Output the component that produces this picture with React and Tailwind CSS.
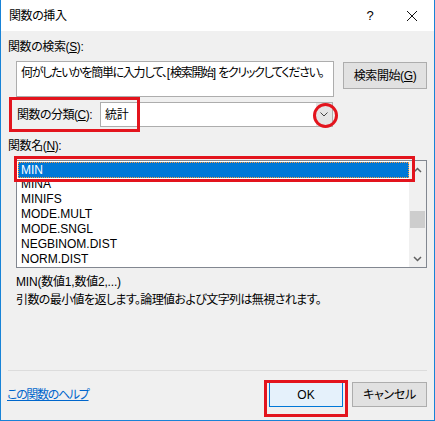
import React from 'react';

const FONT = { fontFamily: '"Liberation Sans", "Noto Sans CJK JP", sans-serif' };

const functions = ['MIN', 'MINA', 'MINIFS', 'MODE.MULT', 'MODE.SNGL', 'NEGBINOM.DIST', 'NORM.DIST'];

const Chevron = ({ up }) => (
    <svg width="9" height="6" viewBox="0 0 9 6">
        <path d={up ? 'M1 5 L4.5 1.5 L8 5' : 'M1 1 L4.5 4.5 L8 1'} fill="none" stroke="#606060" strokeWidth="1.5" />
    </svg>
);

const App = () => {
    return (
        <div className="w-[435px] h-[421px] flex flex-col border-x border-b border-[#1883d7] bg-[#f0f0f0] text-[12px] text-black relative overflow-hidden [font-feature-settings:'palt']" style={FONT}>
            {/* title bar */}
            <div className="h-[31px] bg-white flex items-center pl-[8px] shrink-0">
                <span className="text-[12px] tracking-[-0.4px]">関数の挿入</span>
                <span className="ml-auto text-[13px] w-[12px] text-center mr-[30px]">?</span>
                <svg width="12" height="12" viewBox="0 0 12 12" className="mr-[16px]">
                    <path d="M1 1 L11 11 M11 1 L1 11" stroke="#111" strokeWidth="1" />
                </svg>
            </div>

            <div className="flex-1 flex flex-col pl-[7px] pr-[7px] pt-[9px]">
                <div className="h-[14px] leading-[14px] tracking-[-0.4px]">
                    関数の検索(<span className="underline">S</span>):
                </div>

                {/* search */}
                <div className="flex mt-[7px] pl-[8px]">
                    <div className="w-[318px] h-[36px] bg-white border border-[#adadad] px-[4px] pt-[2px] leading-[18px] tracking-[-1.3px] whitespace-nowrap overflow-hidden">
                        何がしたいかを簡単に入力して、<span className="tracking-normal">[</span>検索開始<span className="tracking-normal">]</span> をクリックしてください。
                    </div>
                    <button className="ml-[9px] mt-[1px] w-[84px] h-[27px] bg-[#e1e1e1] border border-[#adadad] tracking-[-0.4px]">
                        検索開始(<span className="underline">G</span>)
                    </button>
                </div>

                {/* category */}
                <div className="flex items-center mt-[5px] h-[25px] pl-[9px]">
                    <span className="tracking-[-0.5px] w-[83px]">
                        関数の分類(<span className="underline">C</span>):
                    </span>
                    <div className="w-[233px] h-[25px] bg-white border border-[#adadad] flex items-center">
                        <span className="pl-[4px] tracking-[-0.3px]">統計</span>
                        <div className="ml-auto w-[16px] h-[23px] bg-[#e5e5e5] flex items-center justify-center">
                            <svg width="8" height="5" viewBox="0 0 8 5">
                                <path d="M0.5 0.5 L4 4 L7.5 0.5" fill="none" stroke="#444" strokeWidth="1" />
                            </svg>
                        </div>
                    </div>
                </div>

                <div className="mt-[12px] h-[14px] leading-[14px] tracking-[-0.4px]">
                    関数名(<span className="underline">N</span>):
                </div>

                {/* function list */}
                <div className="mt-[7px] ml-[8px] w-[411px] h-[108px] bg-white border border-[#828790] flex">
                    <div className="flex-1 pt-[1px] pl-[1px]">
                        {functions.map((f, i) => (
                            <div
                                key={f}
                                className={
                                    i === 0
                                        ? 'h-[16px] leading-[14px] bg-[#0078d7] text-white pl-[2px] border border-dotted border-[#ff9a3c] mb-[-1px]'
                                        : 'h-[15px] leading-[15px] pl-[3px]'
                                }
                            >
                                {f}
                            </div>
                        ))}
                    </div>
                    <div className="w-[17px] bg-[#f0f0f0] flex flex-col items-center">
                        <div className="h-[17px] flex items-center justify-center"><Chevron up /></div>
                        <div className="flex-1 w-full relative">
                            <div className="absolute left-[1px] right-[1px] top-[33px] h-[17px] bg-[#cdcdcd]" />
                        </div>
                        <div className="h-[17px] flex items-center justify-center"><Chevron /></div>
                    </div>
                </div>

                {/* description */}
                <div className="mt-[5px] pl-[8px] leading-[18px]">
                    <div className="tracking-[-0.2px]">MIN(数値1,数値2,...)</div>
                    <div className="tracking-[-0.6px]">引数の最小値を返します。論理値および文字列は無視されます。</div>
                </div>

                <div className="mt-auto border-t border-[#dcdcdc]" />

                {/* footer */}
                <div className="flex items-center h-[49px] pb-[2px]">
                    <a href="#" className="text-[#0066cc] underline tracking-[-1.3px] -ml-[1px]">この関数のヘルプ</a>
                    <button className="ml-auto w-[74px] h-[25px] bg-[#e5f1fb] border border-[#0078d7]">OK</button>
                    <button className="ml-[9px] w-[75px] h-[25px] bg-[#e1e1e1] border border-[#adadad] tracking-[-0.3px]">キャンセル</button>
                </div>
            </div>

            {/* red annotations */}
            <div className="absolute left-[8px] top-[97px] w-[131px] h-[35px] border-[3px] border-[#e3141d]" />
            <div className="absolute left-[312px] top-[103px] w-[25px] h-[25px] rounded-full border-[3px] border-[#e3141d]" />
            <div className="absolute left-[13px] top-[156px] w-[401px] h-[26px] border-[3px] border-[#e3141d]" />
            <div className="absolute left-[263px] top-[380px] w-[84px] h-[37px] border-[3px] border-[#e3141d]" />
        </div>
    );
};

export default App;
